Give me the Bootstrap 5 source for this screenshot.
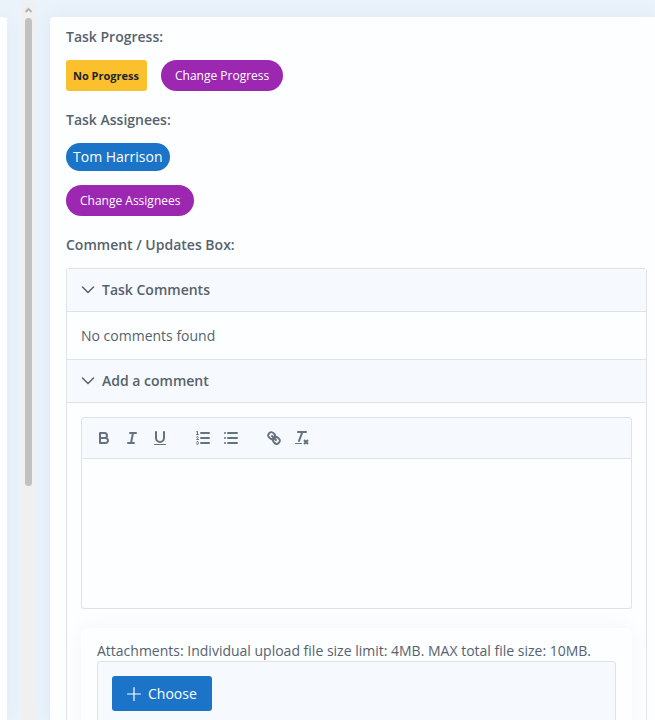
<!DOCTYPE html>
<html lang="en">
<head>
<meta charset="utf-8">
<meta name="viewport" content="width=device-width, initial-scale=1">
<title>Task details</title>
<link href="https://cdn.jsdelivr.net/npm/bootstrap@5.3.0/dist/css/bootstrap.min.css" rel="stylesheet">
<style>
body{font-family:"Open Sans","Noto Sans",sans-serif;font-size:14px;line-height:20px;color:#56626d;background:#eaf2fa}
.side-card{width:7px;margin-top:17px;background:#fdfeff;border-radius:0 4px 0 0;box-shadow:0 0 18px rgba(90,130,170,.08)}
.track{width:14px;margin:3px 14px 0 15px;padding-left:3px;background:#f0f0f0}
.track svg{margin:3px 0 2px}
.thumb{width:7px;height:65vh;background:#c1c1c1;border-radius:4px}
.task-card{margin-top:17px;padding:10px 8px 0 16px;background:#fdfeff;border-radius:4px 0 0 0;box-shadow:0 0 18px rgba(90,130,170,.08)}
.field-title{font-size:14px;line-height:20px;font-weight:600;margin:0 0 13px}
.field-block{margin-bottom:19px}
.gap-mid{gap:14px}
.status-tag{height:31px;padding:0 8px 0 7px;font-size:11px;line-height:18px;font-weight:700;color:#212529;background:#fbc02d;border-radius:3px}
.btn-task{height:31px;padding:0 14px;font-size:12px;font-weight:500;line-height:18px;border:0;background:#9c27b0;color:#fff}
.btn-task:hover{background:#8423a0;color:#fff}
.chip{height:28px;padding:0 7px;background:#1b74c8;color:#fff}
.line{border:1px solid #dfe2e6}
.line-top{border-top:1px solid #dfe2e6}
.panel{border-radius:3px}
.panel-toggle{gap:7px;width:100%;height:42px;padding:0 14px;border:0;background:#f6f9fe;color:#56626d;font-weight:600;text-align:left}
.panel-body{padding:14px}
.note{min-height:48px}
.note p{margin:0}
.panel-head{font-size:14px;line-height:20px;margin:0}
.toolbar{gap:15px;padding:8px;background:#f6f9fe;border-radius:3px 3px 0 0}
.toolbar button{width:28px;height:24px;padding:0 5px;border:0;background:none;color:#65727f}
.toolbar svg{display:block;width:18px;height:18px;fill:none;stroke:currentColor;stroke-width:2;stroke-linecap:round;stroke-linejoin:round}
.toolbar .solid{fill:currentColor;stroke:none}
.toolbar .fine{stroke-width:1}
.editor{height:150px;border-top:0;border-radius:0 0 3px 3px;background:#fdfeff;resize:none;padding:12px 15px;color:inherit}
.upload-card{margin-top:19px;padding:13px 16px 16px;border-radius:6px;background:#fdfeff;box-shadow:0 0 18px rgba(90,110,140,.07)}
.upload-bar{padding:14px;background:#f6f9fe;border-radius:3px 3px 0 0}
.btn-choose{gap:7px;height:35px;padding:0 15px;font-size:14px;line-height:20px;border:0;border-radius:3px;background:#1b74c8;color:#fff}
.btn-choose:hover{background:#1868b4;color:#fff}
</style>
<script src="https://cdn.jsdelivr.net/npm/bootstrap@5.3.0/dist/js/bootstrap.bundle.min.js"></script>
</head>
<body>
<div class="d-flex vh-100 overflow-hidden">
  <div class="side-card flex-shrink-0"></div>
  <div class="track d-flex flex-column align-items-start flex-shrink-0" aria-hidden="true">
    <svg class="flex-shrink-0" width="8" height="10" viewBox="0 0 8 10" fill="none" stroke="#b4b4b4" stroke-width="2"><path d="M.5 6L3.500 3L6.500 6"/></svg>
    <div class="thumb flex-shrink-0"></div>
  </div>
  <main class="task-card flex-grow-1">
    <section class="field-block">
      <h2 class="field-title">Task Progress:</h2>
      <div class="d-flex align-items-center gap-mid">
        <span class="status-tag d-inline-flex align-items-center">No Progress</span>
        <button type="button" class="btn btn-task rounded-pill">Change Progress</button>
      </div>
    </section>
    <section class="field-block">
      <h2 class="field-title">Task Assignees:</h2>
      <div class="d-flex flex-column align-items-start gap-mid">
        <span class="chip rounded-pill d-inline-flex align-items-center">Tom Harrison</span>
        <button type="button" class="btn btn-task rounded-pill">Change Assignees</button>
      </div>
    </section>
    <section>
      <h2 class="field-title">Comment / Updates Box:</h2>
      <div class="panel line overflow-hidden">
        <h3 class="panel-head"><button type="button" class="panel-toggle d-flex align-items-center" data-bs-toggle="collapse" data-bs-target="#comments" aria-expanded="true" aria-controls="comments">
          <svg width="14" height="14" viewBox="0 0 14 14" fill="none" stroke="currentColor" stroke-width="1.500" stroke-linecap="round" stroke-linejoin="round" aria-hidden="true"><path d="M1.500 4L7 9.500L12.500 4"/></svg>Task Comments</button></h3>
        <div id="comments" class="collapse show"><div class="panel-body note line-top pb-0"><p>No comments found</p></div></div>
        <h3 class="panel-head line-top"><button type="button" class="panel-toggle d-flex align-items-center" data-bs-toggle="collapse" data-bs-target="#add" aria-expanded="true" aria-controls="add">
          <svg width="14" height="14" viewBox="0 0 14 14" fill="none" stroke="currentColor" stroke-width="1.500" stroke-linecap="round" stroke-linejoin="round" aria-hidden="true"><path d="M1.500 4L7 9.500L12.500 4"/></svg>Add a comment</button></h3>
        <div id="add" class="collapse show"><div class="panel-body line-top">
          <div class="toolbar line d-flex" role="toolbar" aria-label="Formatting">
            <div class="d-flex">
              <button type="button" aria-label="Bold"><svg viewBox="0 0 18 18"><path d="M5,4H9.5A2.5,2.5,0,0,1,12,6.5v0A2.5,2.5,0,0,1,9.5,9H5V4Z"/><path d="M5,9h5.5A2.5,2.5,0,0,1,13,11.5v0A2.5,2.5,0,0,1,10.5,14H5V9Z"/></svg></button>
              <button type="button" aria-label="Italic"><svg viewBox="0 0 18 18"><path d="M7 4H13M5 14H11M8 14L10 4"/></svg></button>
              <button type="button" aria-label="Underline"><svg viewBox="0 0 18 18"><path d="M5,3V9a4.012,4.012,0,0,0,4,4H9a4.012,4.012,0,0,0,4-4V3"/><rect class="solid" x="3" y="15" width="12" height="1" rx=".5"/></svg></button>
            </div>
            <div class="d-flex">
              <button type="button" aria-label="Numbered list"><svg viewBox="0 0 18 18"><path d="M7 4H15M7 9H15M7 14H15"/><path class="fine" d="M2.500 5.500H4.500"/><path class="solid" d="M3.5,6A0.5,0.5,0,0,1,3,5.5V3.085l-0.276.138A0.5,0.5,0,0,1,2.053,3c-0.124-.247-0.023-0.324.224-0.447l1-.5A0.5,0.5,0,0,1,4,2.5v3A0.5,0.5,0,0,1,3.5,6Z"/><path class="fine" d="M4.5,10.5h-2c0-.234,1.85-1.076,1.85-2.234A0.959,0.959,0,0,0,2.5,8.156"/><path class="fine" d="M2.5,14.846a0.959,0.959,0,0,0,1.85-.109A0.7,0.7,0,0,0,3.75,14a0.688,0.688,0,0,0,.6-0.736,0.959,0.959,0,0,0-1.85-.109"/></svg></button>
              <button type="button" aria-label="Bulleted list"><svg viewBox="0 0 18 18"><path d="M6 4H15M6 9H15M6 14H15M3 4H3M3 9H3M3 14H3"/></svg></button>
            </div>
            <div class="d-flex">
              <button type="button" aria-label="Link"><svg viewBox="0 0 18 18"><path d="M7 7L11 11"/><path d="M8.9,4.577a3.476,3.476,0,0,1,.36,4.679A3.476,3.476,0,0,1,4.577,8.9C3.185,7.5,2.035,6.4,4.217,4.217S7.5,3.185,8.9,4.577Z"/><path d="M13.423,9.1a3.476,3.476,0,0,0-4.679-.36,3.476,3.476,0,0,0,.36,4.679c1.392,1.392,2.5,2.542,4.679.36S14.815,10.5,13.423,9.1Z"/></svg></button>
              <button type="button" aria-label="Clear formatting"><svg viewBox="0 0 18 18"><path d="M5 3H13M6 12L9.350 3"/><path stroke-linecap="butt" d="M11 11L15 15M15 11L11 15"/><rect class="solid" x="2" y="14" width="7" height="1" rx=".5"/></svg></button>
            </div>
          </div>
          <textarea class="editor line d-block w-100" aria-label="Comment"></textarea>
          <div class="upload-card">
            <div>Attachments: Individual upload file size limit: 4MB. MAX total file size: 10MB.</div>
            <div class="upload-bar line">
              <button type="button" class="btn btn-choose d-inline-flex align-items-center"><svg width="14" height="14" viewBox="0 0 14 14" stroke="currentColor" stroke-width="1.200" stroke-linecap="round" aria-hidden="true"><path d="M7 .6V13.400M.6 7H13.400"/></svg>Choose</button>
            </div>
          </div>
        </div></div>
      </div>
    </section>
  </main>
</div>
</body>
</html>
